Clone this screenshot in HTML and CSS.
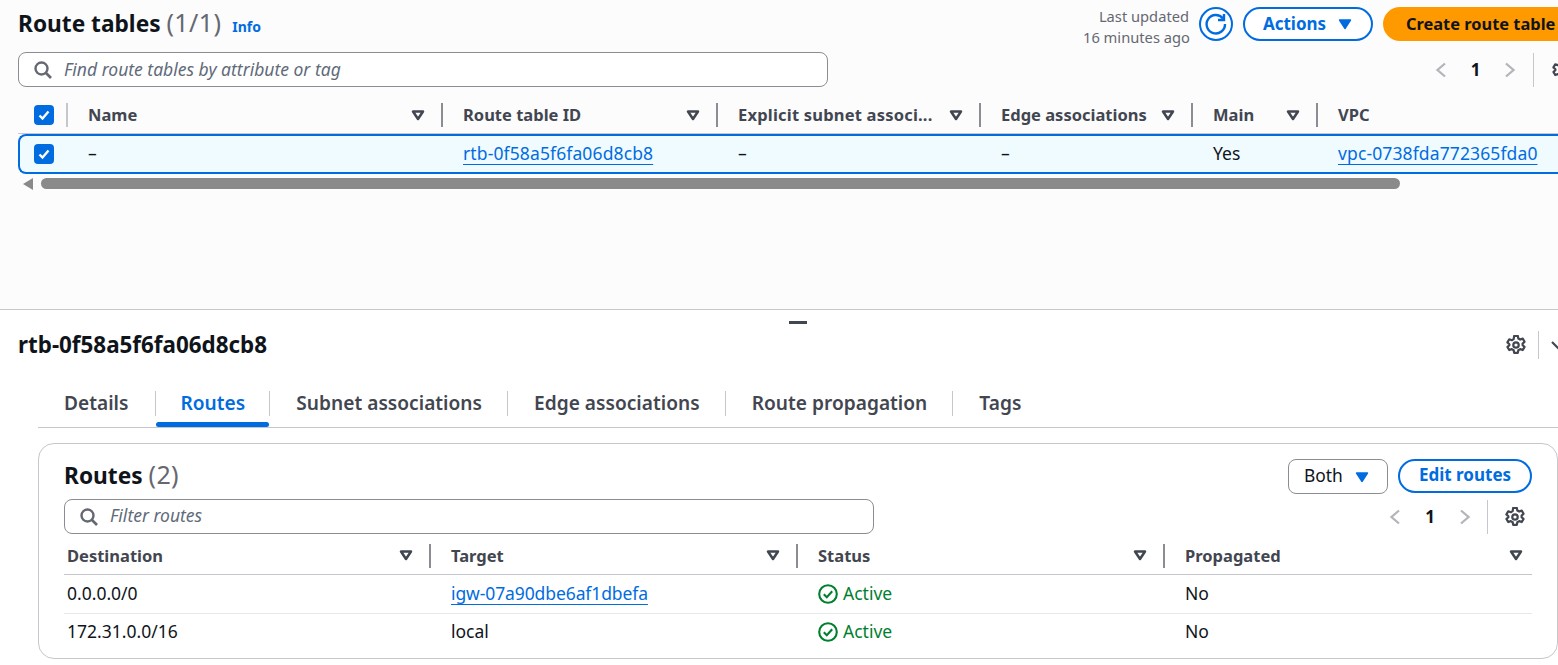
FILE: index.html
```html
<!DOCTYPE html>
<html>
<head>
<meta http-equiv="Content-Type" content="text/html; charset=utf-8"/>
<title>Route tables</title>
<link rel="stylesheet" href="styles.css">
</head>
<body>
<svg class="defs" width="0" height="0">
  <symbol id="caret" viewBox="0 0 16 16"><path d="M3 4.500h10L8 12z" fill="none" stroke="currentColor" stroke-width="2.500" stroke-linejoin="round"/></symbol>
  <symbol id="caret-fill" viewBox="0 0 16 16"><path d="M2.500 4h11L8 12.500z" fill="currentColor" stroke="currentColor" stroke-width="1.400" stroke-linejoin="round"/></symbol>
  <symbol id="search" viewBox="0 0 18 18"><circle cx="7.500" cy="7.500" r="6" fill="none" stroke="currentColor" stroke-width="2.400"/><path d="M12 12l5 5" stroke="currentColor" stroke-width="2.600" fill="none"/></symbol>
  <symbol id="gear" viewBox="0.300 0.300 15.400 15.400"><path d="M6.600 1h2.800l.4 2 1.400.8 2-.7 1.400 2.400-1.500 1.400v1.200l1.500 1.400-1.400 2.400-2-.7-1.400.8-.4 2H6.600l-.4-2-1.400-.8-2 .7-1.400-2.400 1.500-1.400V7.400L1.400 6l1.400-2.400 2 .7 1.400-.8z" fill="none" stroke="currentColor" stroke-width="1.700" stroke-linejoin="round"/><circle cx="8" cy="8" r="2.100" fill="none" stroke="currentColor" stroke-width="1.700"/></symbol>
  <symbol id="prev" viewBox="0 0 16 16"><path d="M12 1.500L4.500 8l7.500 6.500" fill="none" stroke="currentColor" stroke-width="2.300"/></symbol>
  <symbol id="next" viewBox="0 0 16 16"><path d="M4 1.500L11.500 8 4 14.500" fill="none" stroke="currentColor" stroke-width="2.300"/></symbol>
  <symbol id="check" viewBox="0 0 14 14"><path d="M2.500 7.500l3 3L11.500 3.500" fill="none" stroke="#fff" stroke-width="2.400"/></symbol>
  <symbol id="ok" viewBox="0 0 20 20"><circle cx="10" cy="10" r="8.800" fill="none" stroke="currentColor" stroke-width="2.100"/><path d="M5.800 10.200l3 3 5.400-6" fill="none" stroke="currentColor" stroke-width="2.100"/></symbol>
</svg>

<div class="top-pane">
  <div class="page-head">
    <h1 class="title">Route tables <span class="count">(1/1)</span> <a class="info">Info</a></h1>
    <div class="head-actions">
      <div class="updated">Last updated<br>16 minutes ago</div>
      <button class="btn-icon"><svg width="24" height="24" viewBox="0 0 24 24"><path d="M19 6.500A9.200 9.200 0 1 0 21 12" fill="none" stroke="currentColor" stroke-width="2.400"/><path d="M20 2v6h-6" fill="none" stroke="currentColor" stroke-width="2.400"/></svg></button>
      <button class="btn btn-actions">Actions <svg class="ico-16"><use href="#caret-fill"/></svg></button>
      <button class="btn-primary">Create route table</button>
    </div>
  </div>
  <div class="filter-row">
    <div class="search search-main"><svg class="ico-18"><use href="#search"/></svg><span>Find route tables by attribute or tag</span></div>
    <div class="pager pager-main">
      <svg class="ico-16 off"><use href="#prev"/></svg><b>1</b><svg class="ico-16 off"><use href="#next"/></svg>
      <i class="vbar"></i>
      <svg class="ico-20 gear"><use href="#gear"/></svg>
    </div>
  </div>
  <div class="rt-head">
    <div class="cell-check"><span class="box"><svg width="14" height="14"><use href="#check"/></svg></span></div>
    <div class="th c-name">Name<svg class="ico-16"><use href="#caret"/></svg></div>
    <div class="th c-id">Route table ID<svg class="ico-16"><use href="#caret"/></svg></div>
    <div class="th c-subnet"><span class="clip">Explicit subnet associ...</span><svg class="ico-16"><use href="#caret"/></svg></div>
    <div class="th c-edge">Edge associations<svg class="ico-16"><use href="#caret"/></svg></div>
    <div class="th c-main">Main<svg class="ico-16"><use href="#caret"/></svg></div>
    <div class="th c-vpc">VPC</div>
  </div>
  <div class="rt-row">
    <div class="cell-check"><span class="box"><svg width="14" height="14"><use href="#check"/></svg></span></div>
    <div class="td c-name">–</div>
    <div class="td c-id"><a>rtb-0f58a5f6fa06d8cb8</a></div>
    <div class="td c-subnet">–</div>
    <div class="td c-edge">–</div>
    <div class="td c-main">Yes</div>
    <div class="td c-vpc"><a>vpc-0738fda772365fda0</a></div>
  </div>
  <div class="hscroll"><i class="arrow"></i><i class="thumb"></i></div>
</div>

<div class="bottom-pane">
  <div class="handle"></div>
  <div class="detail-head">
    <h2 class="detail-title">rtb-0f58a5f6fa06d8cb8</h2>
    <div class="detail-tools">
      <svg class="ico-20 gear"><use href="#gear"/></svg>
      <i class="vbar"></i>
      <svg class="ico-16 chev" viewBox="0 0 16 16"><path d="M2 5l6 6 6-6" fill="none" stroke="currentColor" stroke-width="2.200"/></svg>
    </div>
  </div>
  <div class="tabs">
    <div class="tab">Details</div>
    <div class="tab active">Routes</div>
    <div class="tab">Subnet associations</div>
    <div class="tab">Edge associations</div>
    <div class="tab">Route propagation</div>
    <div class="tab">Tags</div>
  </div>
  <div class="card">
    <div class="card-head">
      <h3 class="card-title">Routes <span class="count">(2)</span></h3>
      <div class="card-actions">
        <div class="select">Both <svg class="ico-16"><use href="#caret-fill"/></svg></div>
        <button class="btn btn-edit">Edit routes</button>
      </div>
    </div>
    <div class="card-filter">
      <div class="search search-routes"><svg class="ico-18"><use href="#search"/></svg><span>Filter routes</span></div>
      <div class="pager">
        <svg class="ico-16 off"><use href="#prev"/></svg><b>1</b><svg class="ico-16 off"><use href="#next"/></svg>
        <i class="vbar"></i>
        <svg class="ico-20 gear"><use href="#gear"/></svg>
      </div>
    </div>
    <div class="routes routes-head">
      <div class="rh">Destination<svg class="ico-16"><use href="#caret"/></svg></div>
      <div class="rh">Target<svg class="ico-16"><use href="#caret"/></svg></div>
      <div class="rh">Status<svg class="ico-16"><use href="#caret"/></svg></div>
      <div class="rh">Propagated<svg class="ico-16"><use href="#caret"/></svg></div>
    </div>
    <div class="routes route-row">
      <div>0.0.0.0/0</div>
      <div><a>igw-07a90dbe6af1dbefa</a></div>
      <div class="status"><svg class="ico-20"><use href="#ok"/></svg>Active</div>
      <div>No</div>
    </div>
    <div class="routes route-row last">
      <div>172.31.0.0/16</div>
      <div>local</div>
      <div class="status"><svg class="ico-20"><use href="#ok"/></svg>Active</div>
      <div>No</div>
    </div>
  </div>
</div>
</body>
</html>
```

FILE: styles.css
```css
html, body {
  margin: 0;
  height: 665px;
  overflow: hidden;
  background: #fff;
}

body {
  width: 1558px;
  font-family: "Noto Sans", sans-serif;
  font-size: 17.5px;
  color: #0f141a;
}

.defs {
  display: block;
  height: 0;
}

svg {
  flex: none;
}

a {
  color: #006ce0;
  text-decoration: underline;
  text-underline-offset: 4px;
}

button {
  font-family: inherit;
  cursor: pointer;
}

.ico-16 { width: 16px; height: 16px; }
.ico-18 { width: 18px; height: 18px; }
.ico-20 { width: 20px; height: 20px; }
.off { color: #b4b4bb; }
.gear { color: #424650; }

.vbar {
  display: block;
  width: 1px;
  background: #c6c6cd;
}

/* top pane */
.top-pane {
  height: 310px;
  box-sizing: border-box;
  border-bottom: 1px solid #c6c6cd;
  background: #fcfcfd;
  padding-left: 18px;
  overflow: hidden;
}

.page-head {
  height: 52px;
  display: flex;
  justify-content: space-between;
}

.title {
  margin: 7px 0 0;
  font-size: 22.7px;
  line-height: 30px;
  font-weight: 700;
  white-space: nowrap;
}

.count {
  font-weight: 400;
  font-size: 25px;
  letter-spacing: 0.4px;
  color: #656871;
}

.info {
  margin-left: 5px;
  font-size: 14px;
  font-weight: 700;
  text-decoration: none;
}

.head-actions {
  display: flex;
  align-items: flex-start;
  width: 476px;
  flex: none;
  margin-right: -1px;
  padding-top: 7px;
  box-sizing: border-box;
}

.updated {
  width: 106px;
  flex: none;
  margin-top: -1px;
  text-align: right;
  font-size: 14.7px;
  line-height: 21px;
  color: #656871;
  white-space: nowrap;
}

.btn-icon {
  width: 34px;
  height: 34px;
  flex: none;
  margin-left: 10px;
  padding: 0;
  border: 2px solid #006ce0;
  border-radius: 50%;
  background: #fff;
  color: #006ce0;
  display: flex;
  align-items: center;
  justify-content: center;
}

.btn {
  height: 34px;
  box-sizing: border-box;
  border: 2px solid #006ce0;
  border-radius: 17px;
  background: #fff;
  color: #006ce0;
  font-size: 17px;
  font-weight: 700;
  padding: 0 0 2px;
  display: flex;
  align-items: center;
  justify-content: center;
  flex: none;
}

.btn svg {
  position: relative;
  top: 1px;
}

.btn-actions {
  width: 130px;
  margin-left: 10px;
  gap: 11px;
}

.btn-primary {
  width: 176px;
  height: 34px;
  flex: none;
  margin-left: 10px;
  border: 0;
  border-radius: 17px 0 0 17px;
  background: #ff9900;
  color: #0f141a;
  font-size: 16.4px;
  font-weight: 700;
  padding: 0 0 2px 23px;
  text-align: left;
  white-space: nowrap;
}

.filter-row {
  height: 44px;
  display: flex;
  justify-content: space-between;
}

.search {
  height: 35px;
  box-sizing: border-box;
  border: 1px solid #8c8c94;
  border-radius: 8px;
  background: #fff;
  display: flex;
  align-items: center;
  gap: 12px;
  padding-left: 15px;
  color: #656871;
  font-size: 17.5px;
  font-style: italic;
}

.search span {
  color: #5f6b7a;
  padding-bottom: 2px;
}

.search-main { width: 810px; }

.pager {
  display: flex;
  align-items: center;
  height: 35px;
}

.pager b {
  width: 54px;
  text-align: center;
  font-size: 17px;
}

.pager .vbar {
  height: 34px;
  margin: 0 18px 0 15px;
}

.pager-main {
  margin-right: -14px;
  width: 139px;
  flex: none;
}

/* route table list */
.rt-head, .rt-row {
  display: grid;
  width: 1560px;
}

.rt-head {
  grid-template-columns: 48px 375px 275px 263px 212px 125px 262px;
  height: 38px;
  align-items: center;
  border-bottom: 1px solid #c6c6cd;
  box-sizing: border-box;
}

.cell-check {
  display: flex;
  padding-left: 16px;
  align-items: center;
}

.box {
  width: 20px;
  height: 20px;
  border-radius: 4px;
  background: #006ce0;
  display: flex;
  align-items: center;
  justify-content: center;
}

.th {
  height: 24px;
  box-sizing: border-box;
  display: flex;
  align-items: center;
  justify-content: space-between;
  padding: 0 15px 0 20px;
  border-left: 2px solid #8c8c94;
  font-weight: 700;
  font-size: 16.5px;
  color: #424650;
  white-space: nowrap;
}

.th.c-name {
  border-left-color: #c6c6cd;
}

.clip {
  overflow: hidden;
  letter-spacing: 0.2px;
}

.rt-row {
  grid-template-columns: 46px 375px 275px 263px 212px 125px 262px;
  height: 40px;
  box-sizing: border-box;
  border: 2px solid #006ce0;
  border-right: 0;
  border-radius: 8px 0 0 8px;
  background: #f0fbff;
  align-items: center;
  line-height: 22px;
}

.rt-row a {
  letter-spacing: 0.12px;
}

.td {
  padding-left: 22px;
  padding-bottom: 2px;
}

.rt-row .cell-check {
  padding-left: 14px;
}

.hscroll {
  display: flex;
  align-items: center;
  gap: 8px;
  height: 11px;
  margin: 4px 0 0 5px;
}

.arrow {
  display: block;
  width: 0;
  height: 0;
  border-style: solid;
  border-width: 6px 10px 6px 0;
  border-color: transparent #8a8a8a transparent transparent;
}

.thumb {
  display: block;
  width: 1359px;
  height: 11px;
  border-radius: 6px;
  background: #8a8a8a;
}

/* bottom pane */
.bottom-pane {
  position: relative;
  padding-left: 18px;
}

.handle {
  position: absolute;
  left: 789px;
  top: 11px;
  width: 18px;
  height: 3px;
  background: #424650;
}

.detail-head {
  height: 72px;
  display: flex;
  justify-content: space-between;
}

.detail-title {
  margin: 20px 0 0;
  font-size: 22.4px;
  line-height: 30px;
  font-weight: 700;
}

.detail-tools {
  display: flex;
  align-items: center;
  height: 30px;
  margin-top: 20px;
  margin-right: -8px;
}

.detail-tools .vbar {
  height: 28px;
  margin: 0 11px 0 12px;
}

.chev {
  color: #424650;
}

.tabs {
  margin-left: 20px;
  height: 46px;
  box-sizing: border-box;
  display: flex;
  border-bottom: 1px solid #c6c6cd;
  padding-top: 9px;
}

.tab {
  position: relative;
  height: 25px;
  line-height: 25px;
  padding: 0 25px 0 26px;
  font-size: 19.1px;
  font-weight: 600;
  letter-spacing: 0.03px;
  color: #424650;
  border-left: 1px solid #c6c6cd;
  white-space: nowrap;
}

.tab:first-child {
  border-left: 0;
  padding-right: 26px;
}

.tab.active {
  color: #006ce0;
  padding: 0 24px 0 25px;
}

.tab.active::after {
  content: "";
  position: absolute;
  left: 0;
  right: 0;
  bottom: -11px;
  height: 5px;
  border-radius: 3px;
  background: #006ce0;
}

/* routes card */
.card {
  margin: 15px 0 0 20px;
  width: 1520px;
  height: 216px;
  box-sizing: border-box;
  border: 1px solid #c6c6cd;
  border-radius: 16px;
  padding: 15px 25px 0;
  background: #fff;
}

.card-head {
  height: 40px;
  display: flex;
  justify-content: space-between;
}

.card-title {
  margin: 0;
  font-size: 22.7px;
  line-height: 30px;
  font-weight: 700;
}

.card-actions {
  display: flex;
  gap: 10px;
  align-items: flex-start;
}

.select {
  width: 100px;
  height: 35px;
  box-sizing: border-box;
  border: 1px solid #8c8c94;
  border-radius: 8px;
  display: flex;
  align-items: center;
  gap: 11px;
  padding: 0 0 4px 15px;
  color: #0f141a;
  font-size: 17.4px;
}

.select svg {
  color: #006ce0;
  position: relative;
  top: 2px;
}

.btn-edit {
  width: 134px;
  padding-bottom: 4px;
}

.card-filter {
  height: 39px;
  display: flex;
  justify-content: space-between;
}

.search-routes {
  width: 810px;
}

.search-routes span {
  padding-bottom: 4px;
}

.card-filter .pager {
  margin-right: 7px;
}

.card-filter .pager .vbar {
  margin: 0 17px 0 14px;
}

.routes {
  display: grid;
  grid-template-columns: 365px 367px 367px 369px;
  align-items: center;
  width: 1468px;
}

.routes-head {
  height: 37px;
  border-bottom: 1px solid #c6c6cd;
  box-sizing: border-box;
}

.rh {
  height: 24px;
  box-sizing: border-box;
  display: flex;
  align-items: center;
  justify-content: space-between;
  padding: 0 15px 2px 20px;
  border-left: 2px solid #8c8c94;
  font-weight: 700;
  font-size: 16.5px;
  color: #424650;
}

.rh:first-child {
  border-left: 0;
  padding-left: 3px;
}

.rh:last-child {
  padding-right: 8px;
}

.route-row {
  height: 39px;
  box-sizing: border-box;
  border-bottom: 1px solid #e8e8ec;
}

.route-row.last {
  border-bottom: 0;
  height: 37px;
  padding-bottom: 2px;
}

.route-row > div {
  padding: 0 0 2px 22px;
}

.route-row > div:first-child {
  padding-left: 3px;
}

.route-row a {
  letter-spacing: -0.1px;
}

.status {
  display: flex;
  align-items: center;
  gap: 5px;
  color: #00802f;
}

.status svg {
  position: relative;
  top: 1px;
}
```
